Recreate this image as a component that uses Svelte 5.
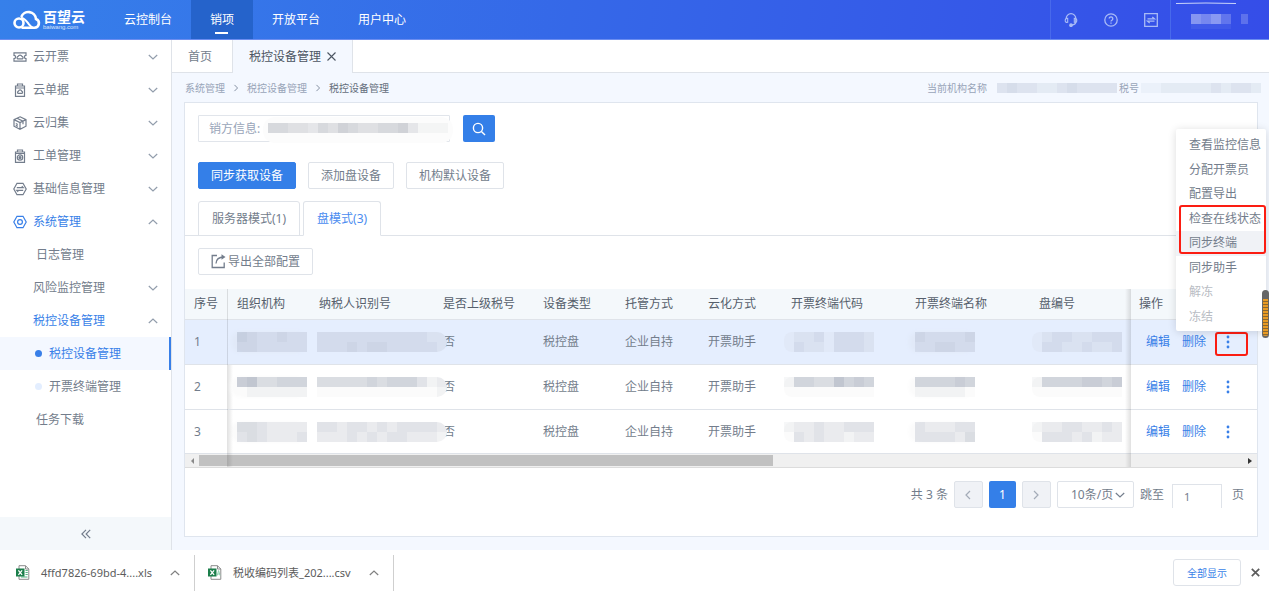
<script>
  const nav = ['云控制台', '销项', '开放平台', '用户中心'];
  let activeNav = $state('销项');

  const icons = {
    ticket:
      '<path d="M1 2.8h12v2.6a1.6 1.6 0 0 0 0 3.2v2.6H1V8.600a1.600 1.600 0 0 0 0-3.200z"/><path d="M4.600 8.800a1.400 1.400 0 0 1 .6-2.500 2 2 0 0 1 3.700 0 1.400 1.400 0 0 1 .6 2.500z"/>',
    bill:
      '<path d="M2.500 3h9v10.300h-9zM4.500 3V1h5v2M2.500 5h9"/><path d="M5 10.300a1.300 1.300 0 0 1 .5-2.200 1.700 1.700 0 0 1 3.200 0 1.300 1.300 0 0 1 .4 2.200z"/>',
    cube:
      '<path d="M7 .8 13 3.600v6.600L7 13.300 1 10.200V3.600zM1 3.600l6 3 6-3M7 6.600v6.700M4 2.200l6 3v3"/><path d="M2.800 7.500l2 1M2.800 9.400l2 1"/>',
    order:
      '<path d="M2.500 3h9v10.300h-9zM4.500 3V1h5v2M2.500 4.500h9"/><circle cx="7" cy="8.500" r="2.700"/><circle cx="7" cy="8.500" r="1" fill="currentColor"/>',
    base: '<path d="M4 1.300h6L13.200 7 10 12.700H4L.8 7z"/><path d="M3.800 5.600h6.400L8.800 4.200M10.200 8.400H3.800l1.400 1.400"/>',
    gear: '<path d="M4 1.300h6L13.200 7 10 12.700H4L.8 7z"/><circle cx="7" cy="7" r="2.400"/>'
  };

  const menu = [
    { label: '云开票', icon: 'ticket', arrow: 'down' },
    { label: '云单据', icon: 'bill', arrow: 'down' },
    { label: '云归集', icon: 'cube', arrow: 'down' },
    { label: '工单管理', icon: 'order', arrow: 'down' },
    { label: '基础信息管理', icon: 'base', arrow: 'down' },
    { label: '系统管理', icon: 'gear', arrow: 'up', active: true },
    { label: '日志管理', kind: 'leaf' },
    { label: '风险监控管理', kind: 'sub', arrow: 'down' },
    { label: '税控设备管理', kind: 'sub', arrow: 'up', active: true },
    { label: '税控设备管理', kind: 'dot', active: true, current: true },
    { label: '开票终端管理', kind: 'dot' },
    { label: '任务下载', kind: 'leaf' }
  ];

  const columns = [
    ['序号', 43], ['组织机构', 82], ['纳税人识别号', 124], ['是否上级税号', 100],
    ['设备类型', 82], ['托管方式', 83], ['云化方式', 83], ['开票终端代码', 124],
    ['开票终端名称', 124], ['盘编号', 100], ['操作', 127]
  ];

  // Each digit is the strength of one masked 10px tile.
  const rows = [
    {
      hot: true,
      org: ['4322322', '3322222'],
      tax: ['2222222222211', '2223233222221'],
      code: ['011202221', '021102221'],
      name: ['322223', '223322'],
      disk: ['012211222', '022112112']
    },
    {
      org: ['6744555', '0111111'],
      tax: ['4444454555312', '0000000000001'],
      code: ['155447565', '000000000'],
      name: ['555565', '111110'],
      disk: ['155556656', '000000000']
    },
    {
      org: ['4432222', '3432223'],
      tax: ['3323323233332', '2223232332221'],
      code: ['122322333', '032322122'],
      name: ['322233', '333324'],
      disk: ['122332232', '033323122']
    }
  ];

  const actions = [
    '查看监控信息', '分配开票员', '配置导出', '检查在线状态', '同步终端', '同步助手', '解冻', '冻结'
  ];

  let mode = $state('disk');
  let page = $state('1');
  let seller = $state('');
</script>

{#snippet chevron(dir)}
  <svg class="chev" width="10" height="10" viewBox="0 0 10 10" fill="none" stroke="currentColor" stroke-width="1.200" aria-hidden="true">
    {#if dir === 'up'}<path d="M.8 7 5 3l4.200 4" />
    {:else if dir === 'left'}<path d="M7 1 3 5l4 4" />
    {:else if dir === 'right'}<path d="M3 1l4 4-4 4" />
    {:else}<path d="M.8 3 5 7l4.200-4" />{/if}
  </svg>
{/snippet}

{#snippet tiles(lines, color)}
  <svg class="tiles" width={lines[0].length * 10} height={lines.length * 10} shape-rendering="crispEdges" aria-hidden="true">
    {#each lines as line, y}
      {#each line.split('') as n, x}
        <rect x={x * 10} y={y * 10} width="10" height="10" fill={color} fill-opacity={n * 0.065} />
      {/each}
    {/each}
  </svg>
{/snippet}

<div class="page">
  <header class="top">
    <a class="logo" href="#home" aria-label="百望云">
      <svg width="28" height="20" viewBox="0 0 28 20" fill="none" stroke="#fff" stroke-width="2.600" aria-hidden="true">
        <path d="M8.500 17.700h13a4.500 4.500 0 0 0 1.500-8.700A7.600 7.600 0 0 0 8.300 7" />
        <circle cx="6" cy="13" r="4.500" />
        <path d="M8 7.900c4 0 5.500 3 8 6.500 1 1.300 2 2.300 3.500 3" stroke-width="2" />
      </svg>
      <span class="brand"><b>百望云</b><small>baiwang.com</small></span>
    </a>
    <nav>
      {#each nav as item}
        <a href="#nav" class:on={item === activeNav} onclick={() => (activeNav = item)}>{item}</a>
      {/each}
    </nav>
    <div class="tools">
      <button aria-label="客服">
        <svg width="14" height="14" viewBox="0 0 14 14" fill="none" stroke="currentColor" stroke-width="1.300">
          <path d="M2.200 6V5.500a4.800 4.800 0 0 1 9.600 0v3c0 2-1.500 3.300-3.800 3.500" />
          <path d="M3.700 5.300v4C1.900 9.500 1.200 8.800 1.200 7.400s.7-2.100 2.500-2.100zM10.300 5.300v4c1.800.2 2.500-.5 2.500-1.900s-.7-2.100-2.500-2.100z" stroke-width="1.100" />
          <circle cx="7" cy="12.200" r="1.200" fill="currentColor" />
        </svg>
      </button>
      <button aria-label="帮助">
        <svg width="14" height="14" viewBox="0 0 14 14" fill="none" stroke="currentColor" stroke-width="1.300">
          <circle cx="7" cy="7" r="6.200" /><path d="M5.200 5.600a1.800 1.800 0 1 1 2.700 1.600c-.7.400-.9.700-.9 1.300M7 9.400v1.300" />
        </svg>
      </button>
      <button aria-label="切换">
        <svg width="14" height="14" viewBox="0 0 14 14" fill="none" stroke="currentColor" stroke-width="1.300">
          <path d="M.7.7h12.600v12.600H.7zM3.500 5.900h7L8.300 4M10.500 8.200h-7l2.200 1.900" />
        </svg>
      </button>
    </div>
    <div class="user">
      <svg width="74" height="30" aria-hidden="true">
        <path d="M2 3.500Q32 2.500 62 3.500" stroke="#c9d4fb" fill="none" />
        <g fill="#fff">
          <rect x="17" y="14" width="10" height="10" opacity=".4" /><rect x="27" y="14" width="10" height="10" opacity=".32" />
          <rect x="37" y="14" width="10" height="10" opacity=".42" /><rect x="47" y="14" width="10" height="10" opacity=".22" />
          <rect x="67" y="14" width="7" height="10" opacity=".2" /><rect x="17" y="24" width="40" height="5" opacity=".06" />
        </g>
      </svg>
    </div>
  </header>

  <div class="body">
    <aside>
      <div class="menu">
        {#each menu as m}
          <a href="#menu" class={['entry', m.kind]} class:active={m.active} class:current={m.current}>
            {#if m.icon}
              <svg width="14" height="14" viewBox="0 0 14 14" fill="none" stroke="currentColor" stroke-width="1.200" aria-hidden="true">{@html icons[m.icon]}</svg>
            {/if}
            {#if m.kind === 'dot'}<i></i>{/if}
            <span>{m.label}</span>
            {#if m.arrow}{@render chevron(m.arrow)}{/if}
          </a>
        {/each}
      </div>
      <button class="fold" aria-label="收起菜单">
        <svg width="10" height="10" viewBox="0 0 10 10" fill="none" stroke="currentColor" stroke-width="1.200"><path d="M5 .8.900 5 5 9.200M9.200.8 5.100 5l4.100 4.200" /></svg>
      </button>
    </aside>

    <main>
      <div class="tabs">
        <a href="#index">首页</a>
        <div class="opened">
          <a href="#device">税控设备管理</a>
          <button aria-label="关闭标签">
            <svg width="9" height="9" viewBox="0 0 9 9" stroke="currentColor" stroke-width="1.100"><path d="M.5.5l8 8M8.500.5l-8 8" /></svg>
          </button>
        </div>
      </div>

      <div class="crumbs">
        <a href="#sys">系统管理</a>{@render chevron('right')}
        <a href="#dev">税控设备管理</a>{@render chevron('right')}
        <strong>税控设备管理</strong>
        <div class="org">
          <span>当前机构名称</span>
          {@render tiles(['343322343333'], '#7f90ad')}
          <span>税号</span>
          {@render tiles(['112222232332'], '#7f90ad')}
        </div>
      </div>

      <section class="card">
        <form class="search" onsubmit={(e) => e.preventDefault()}>
          <div class="field">
            <label for="seller">销方信息:</label>
            <input id="seller" bind:value={seller} />
            <span class="mask">{@render tiles(['554435465445563111'], '#8a8f9c')}</span>
          </div>
          <button class="primary find" aria-label="查询">
            <svg width="14" height="14" viewBox="0 0 14 14" fill="none" stroke="#fff" stroke-width="1.400"><circle cx="6" cy="6" r="4.600" /><path d="M9.400 9.400l3.600 3.600" /></svg>
          </button>
        </form>

        <div class="buttons">
          <button class="primary">同步获取设备</button>
          <button>添加盘设备</button>
          <button>机构默认设备</button>
        </div>

        <div class="modes">
          <button class:on={mode === 'server'} onclick={() => (mode = 'server')}>服务器模式(1)</button>
          <button class:on={mode === 'disk'} onclick={() => (mode = 'disk')}>盘模式(3)</button>
        </div>

        <div class="buttons export">
          <button>
            <svg width="15" height="15" viewBox="0 0 15 15" fill="none" stroke="currentColor" stroke-width="1.300" aria-hidden="true">
              <path d="M6 1.500H1.200v12h12V8.500M5 9.500c.2-4 2.300-6.400 8-6.500" /><path d="M10.500.2l4 2.800-4 2.700z" fill="currentColor" stroke="none" />
            </svg>导出全部配置
          </button>
        </div>

        <div class="grid">
          <table>
            <colgroup>{#each columns as [, w]}<col style:width="{w}px" />{/each}</colgroup>
            <thead>
              <tr>{#each columns as [name]}<th>{name}</th>{/each}</tr>
            </thead>
            <tbody>
              {#each rows as r, i}
                <tr class:hot={r.hot}>
                  <td>{i + 1}</td>
                  <td><span class="blot">{@render tiles(r.org, '#7c869c')}</span></td>
                  <td class="over"><span class="blot long">{@render tiles(r.tax, '#7c869c')}</span></td>
                  <td>否</td>
                  <td>税控盘</td>
                  <td>企业自持</td>
                  <td>开票助手</td>
                  <td><span class="blot shift">{@render tiles(r.code, '#7c869c')}</span></td>
                  <td><span class="blot">{@render tiles(r.name, '#7c869c')}</span></td>
                  <td><span class="blot shift">{@render tiles(r.disk, '#7c869c')}</span></td>
                  <td>
                    <div class="ops">
                      <a href="#edit">编辑</a><a href="#delete">删除</a>
                      <button aria-label="更多操作" class:marked={r.hot}>
                        <svg width="4" height="14" viewBox="0 0 4 14" fill="currentColor"><circle cx="2" cy="2" r="1.400" /><circle cx="2" cy="7" r="1.400" /><circle cx="2" cy="12" r="1.400" /></svg>
                      </button>
                    </div>
                    {#if r.hot}
                      <div class="popup" role="menu">
                        {#each actions as a, n}
                          <button role="menuitem" class:hover={n === 4} disabled={n > 5}>{a}</button>
                        {/each}
                        <div class="frame"></div>
                      </div>
                      <div class="grip"></div>
                    {/if}
                  </td>
                </tr>
              {/each}
            </tbody>
          </table>
          <div class="scroll" aria-hidden="true">
            <svg width="14" height="12"><path d="M9 3v6L6 6z" fill="#8a8a8a" /></svg>
            <div class="track"><div class="thumb"></div></div>
            <svg width="14" height="12"><path d="M5 3v6l4-3z" fill="#333" /></svg>
          </div>
        </div>

        <div class="pager">
          <span>共 3 条</span>
          <button class="step" aria-label="上一页">{@render chevron('left')}</button>
          <button class="primary num">1</button>
          <button class="step" aria-label="下一页">{@render chevron('right')}</button>
          <div class="size">
            <select aria-label="每页条数"><option>10条/页</option><option>20条/页</option></select>
            {@render chevron('down')}
          </div>
          <label for="jump">跳至</label>
          <input id="jump" bind:value={page} />
          <span>页</span>
        </div>
      </section>
    </main>
  </div>

  <footer>
    {#each [['4ffd7826-69bd-4....xls', 'xls'], ['税收编码列表_202....csv', 'csv']] as [name, type]}
      <div class="file">
        <svg width="14" height="15" viewBox="0 0 14 15" aria-hidden="true">
          <path d="M3 .7h6.500L12.800 4v10.300H3z" fill="#fff" stroke="#8c8c8c" /><path d="M9.500.7V4h3.300" fill="none" stroke="#8c8c8c" />
          {#if type === 'xls'}<path d="M9.500 5.500h2.300M9.500 7.500h2.300M9.500 9.500h2.300M5 12h6.500" stroke="#55b584" />
          {:else}<path d="M9.300 10.500l1.300-5 1.400 5M9.700 9h2" fill="none" stroke="#8fd3b0" />{/if}
          <rect y="3.500" width="8.500" height="8" fill="#1b7f4b" /><path d="M2.400 5.300l3.700 4.500M6.100 5.300L2.400 9.800" stroke="#fff" stroke-width="1.300" />
        </svg>
        <span>{name}</span>
        <button aria-label="下载选项">{@render chevron('up')}</button>
      </div>
    {/each}
    <button class="all">全部显示</button>
    <button class="close" aria-label="关闭下载栏">
      <svg width="9" height="9" viewBox="0 0 9 9" stroke="currentColor" stroke-width="1.700"><path d="M.8.8l7.400 7.400M8.200.8L.8 8.200" /></svg>
    </button>
  </footer>
</div>

<style>
  :global(body) { margin: 0; }
  .page {
    min-height: 100vh; display: flex; flex-direction: column; background: #fff; color: #737d8c;
    font: 12px/20px "Noto Sans", "Noto Sans CJK SC", sans-serif;
  }
  .page * { box-sizing: border-box; }
  a { color: inherit; text-decoration: none; }
  button, input, select { font: inherit; color: inherit; background: none; border: 0; padding: 0; margin: 0; outline: 0; }
  svg { display: block; flex: none; }

  .top { display: flex; height: 40px; color: #fff; background: linear-gradient(100deg, #3680ea, #3568e8 45%, #354de8); border-bottom: 1px solid #6c8df0; }
  .logo { display: flex; align-items: center; gap: 2px; width: 105px; padding-left: 13px; }
  .brand { display: flex; flex-direction: column; gap: 1px; font-family: "Liberation Sans", "Noto Sans CJK SC", sans-serif; }
  .brand b { font-size: 14px; line-height: 14px; }
  .brand small { font-size: 6px; line-height: 5px; opacity: .8; }
  nav { display: flex; flex: 1; }
  nav a { position: relative; padding: 0 19px; line-height: 40px; }
  nav .on { background: #2563cb; }
  nav .on::after { content: ''; position: absolute; left: 50%; bottom: 5px; width: 13px; height: 2px; margin-left: -7px; background: #fff; }
  .tools { display: flex; align-items: center; gap: 26px; padding: 0 12px 0 13px; border-left: 1px solid #4869eb; color: #a9bbf6; }
  .user { width: 99px; padding-left: 3px; border-left: 1px solid #4869eb; }

  .body { flex: 1; display: flex; }
  aside { flex: none; width: 172px; display: flex; flex-direction: column; border-right: 1px solid #dfe3e9; }
  .menu { flex: 1; }
  .entry { display: flex; align-items: center; gap: 6px; height: 33px; padding: 0 13px; }
  .entry span { flex: 1; }
  .entry .chev { color: #929dac; }
  .leaf { padding-left: 36px; }
  .sub { padding-left: 33px; }
  .dot { padding-left: 35px; gap: 7px; }
  .dot i { width: 7px; height: 7px; border-radius: 50%; background: #e3eeff; }
  .active { color: #387fe8; }
  .current { background: #f4f8ff; border-right: 2px solid #387fe8; }
  .current i { background: #387fe8; }
  .fold { height: 33px; display: flex; align-items: center; justify-content: center; background: #f4f8fb; }

  main { flex: 1; min-width: 0; display: flex; flex-direction: column; background: #f4f8ff; }
  .tabs { display: flex; height: 33px; line-height: 34px; background: linear-gradient(#fff, #fff) 0 0 / 100% 32px no-repeat #dfe3e9; }
  .tabs > a { width: 61px; padding-left: 16px; border-right: 1px solid #dfe3e9; }
  .opened { display: flex; align-items: center; gap: 6px; padding: 0 16px; background: #f4f8ff; border-right: 1px solid #dfe3e9; color: #4c5562; }
  .crumbs { display: flex; align-items: center; gap: 8px; height: 29px; padding: 0 8px 0 13px; font-size: 10px; color: #98a4b8; }
  .crumbs .chev { width: 6px; height: 10px; color: #7d899b; }
  .crumbs .chev path { transform: scale(1.3); transform-origin: center; }
  .crumbs strong { font-weight: 400; color: #646e7c; }
  .org { flex: 1; display: flex; align-items: center; justify-content: flex-end; gap: 2px; }
  .org span:first-child { margin-right: 8px; }

  .card { flex: 1; display: flex; flex-direction: column; margin: 0 11px 13px 12px; background: #fff; border: 1px solid #dfe5ee; }
  .card button { cursor: pointer; }
  .search { display: flex; gap: 13px; padding: 12px 13px 0; }
  .field { position: relative; display: flex; align-items: center; width: 252px; height: 27px; padding: 0 10px; border: 1px solid #e1e5eb; border-radius: 1px; color: #98a4b8; }
  .field input { flex: 1; min-width: 0; }
  .mask { position: absolute; top: 1px; left: 64px; width: 190px; height: 26px; padding: 6px 5px; border-radius: 12px; background: #fcfcfc; }
  .primary { background: #347fe8; color: #fff; border-radius: 2px; }
  .find { width: 32px; height: 27px; display: flex; align-items: center; justify-content: center; }
  .buttons { display: flex; gap: 12px; padding: 20px 13px 0; }
  .buttons button { display: flex; align-items: center; gap: 2px; height: 27px; padding: 0 12px; border: 1px solid #dfe3e9; border-radius: 2px; }
  .buttons .primary { border-color: #347fe8; }
  .modes { display: flex; gap: 3px; margin-top: 12px; height: 35px; padding: 0 13px; border-bottom: 1px solid #dfe3e9; }
  .modes button { height: 35px; padding: 0 13px; border: 1px solid #dfe3e9; border-radius: 3px 3px 0 0; }
  .modes .on { background: #fff; border-bottom-color: #fff; color: #4a8cf0; }
  .export { padding-top: 12px; }

  .grid { margin-top: 14px; }
  table { width: 100%; table-layout: fixed; border-collapse: separate; border-spacing: 0; }
  th, td { position: relative; padding: 0 0 0 9px; text-align: left; font-weight: 400; border-bottom: 1px solid #dfe3e9; white-space: nowrap; }
  th { height: 31px; background: #f4f8fb; color: #565f6c; }
  td { height: 45px; }
  tbody tr:last-child td { height: 44px; }
  .over { z-index: 1; }
  .hot td { background: #e5eefe; }
  .hot td:last-child { z-index: 2; }
  th:first-child::after, td:first-child::after { content: ''; position: absolute; top: 0; bottom: -1px; right: -5px; width: 6px; background: linear-gradient(90deg, #0000001f, #0000); }
  th:last-child::after, td:last-child::after { content: ''; position: absolute; top: 0; bottom: -1px; left: -5px; width: 6px; background: linear-gradient(270deg, #0000001f, #0000); }
  tbody tr:last-child td::after { bottom: -14px; z-index: 1; }
  .blot { position: relative; display: block; width: max-content; background: #fbfbfb; border-radius: 8px 0 0 8px; box-shadow: -6px 0 4px #fbfbfb; }
  .hot .blot { background: #e1e9f8; box-shadow: -6px 0 4px #e1e9f8; }
  .blot.long { margin-left: -2px; border-radius: 0 10px 10px 0; overflow: hidden; box-shadow: none; }
  .blot.shift { margin-left: -7px; box-shadow: none; }
  .ops { display: flex; align-items: center; gap: 12px; padding-left: 7px; color: #387fe8; }
  .ops button { position: relative; display: flex; align-items: center; justify-content: center; width: 24px; height: 24px; margin-left: -2px; }
  .ops .marked::after { content: ''; position: absolute; box-sizing: border-box; top: 2px; left: -1px; width: 33px; height: 24px; border: 2px solid #fb1d12; border-radius: 3px; }
  .popup { position: absolute; z-index: 3; right: -9px; bottom: 33px; display: flex; flex-direction: column; width: 90px; height: 202px; padding: 4px 0 2px; background: #fff; border-radius: 2px; box-shadow: 0 1px 9px #00000024; }
  .popup button { flex: 1; padding-left: 13px; line-height: 24px; text-align: left; white-space: nowrap; }
  .popup .hover { background: #f0f2f6; }
  .popup button:disabled { color: #b9bdc4; }
  .frame { position: absolute; top: 76px; left: 3px; right: 0; height: 49px; border: 2px solid #fb1d12; border-radius: 3px; }
  .grip { position: absolute; z-index: 4; top: -30px; right: -12px; width: 7px; height: 48px; border: solid #666; border-width: 9px 1px 2px; border-radius: 4px; background: repeating-linear-gradient(#e89a23 0 2px, #8a672f 2px 3px); }

  .scroll { display: flex; align-items: center; height: 14px; background: #f0f0f0; border-bottom: 1px solid #dcdcdc; }
  .track { flex: 1; }
  .thumb { width: 55%; height: 11px; background: #c1c1c1; }

  .pager { display: flex; align-items: center; justify-content: flex-end; gap: 6px; padding: 13px 13px 28px 0; }
  .pager button { display: flex; align-items: center; justify-content: center; height: 27px; }
  .pager .step { width: 29px; border: 1px solid #dfe3e9; border-radius: 2px; background: #f0f2f6; color: #a3abb7; }
  .pager .num { width: 27px; }
  .size { display: flex; align-items: center; width: 77px; height: 27px; padding-right: 8px; border: 1px solid #dfe3e9; border-radius: 2px; }
  .size select { flex: 1; min-width: 0; padding-left: 13px; appearance: none; }
  .pager input { width: 50px; height: 24px; margin: 3px 4px 0 2px; padding-left: 11px; border: 1px solid #dfe3e9; border-bottom: 0; font-size: 11px; }

  footer { display: flex; align-items: center; height: 45px; padding-right: 9px; color: #5c5c5c; background: #fff; }
  .file { display: flex; align-items: center; height: 36px; padding: 0 14px 0 16px; border-right: 1px solid #cfcfcf; font-size: 11px; }
  .file:nth-child(2) { padding-left: 13px; }
  .file span { margin: 0 18px 0 11px; }
  .file button { color: #808080; }
  .all { height: 27px; margin-left: auto; padding: 0 13px; font-size: 10px; color: #387fe8; border: 1px solid #dfe3e9; border-radius: 3px; }
  .close { margin-left: 10px; }
</style>
